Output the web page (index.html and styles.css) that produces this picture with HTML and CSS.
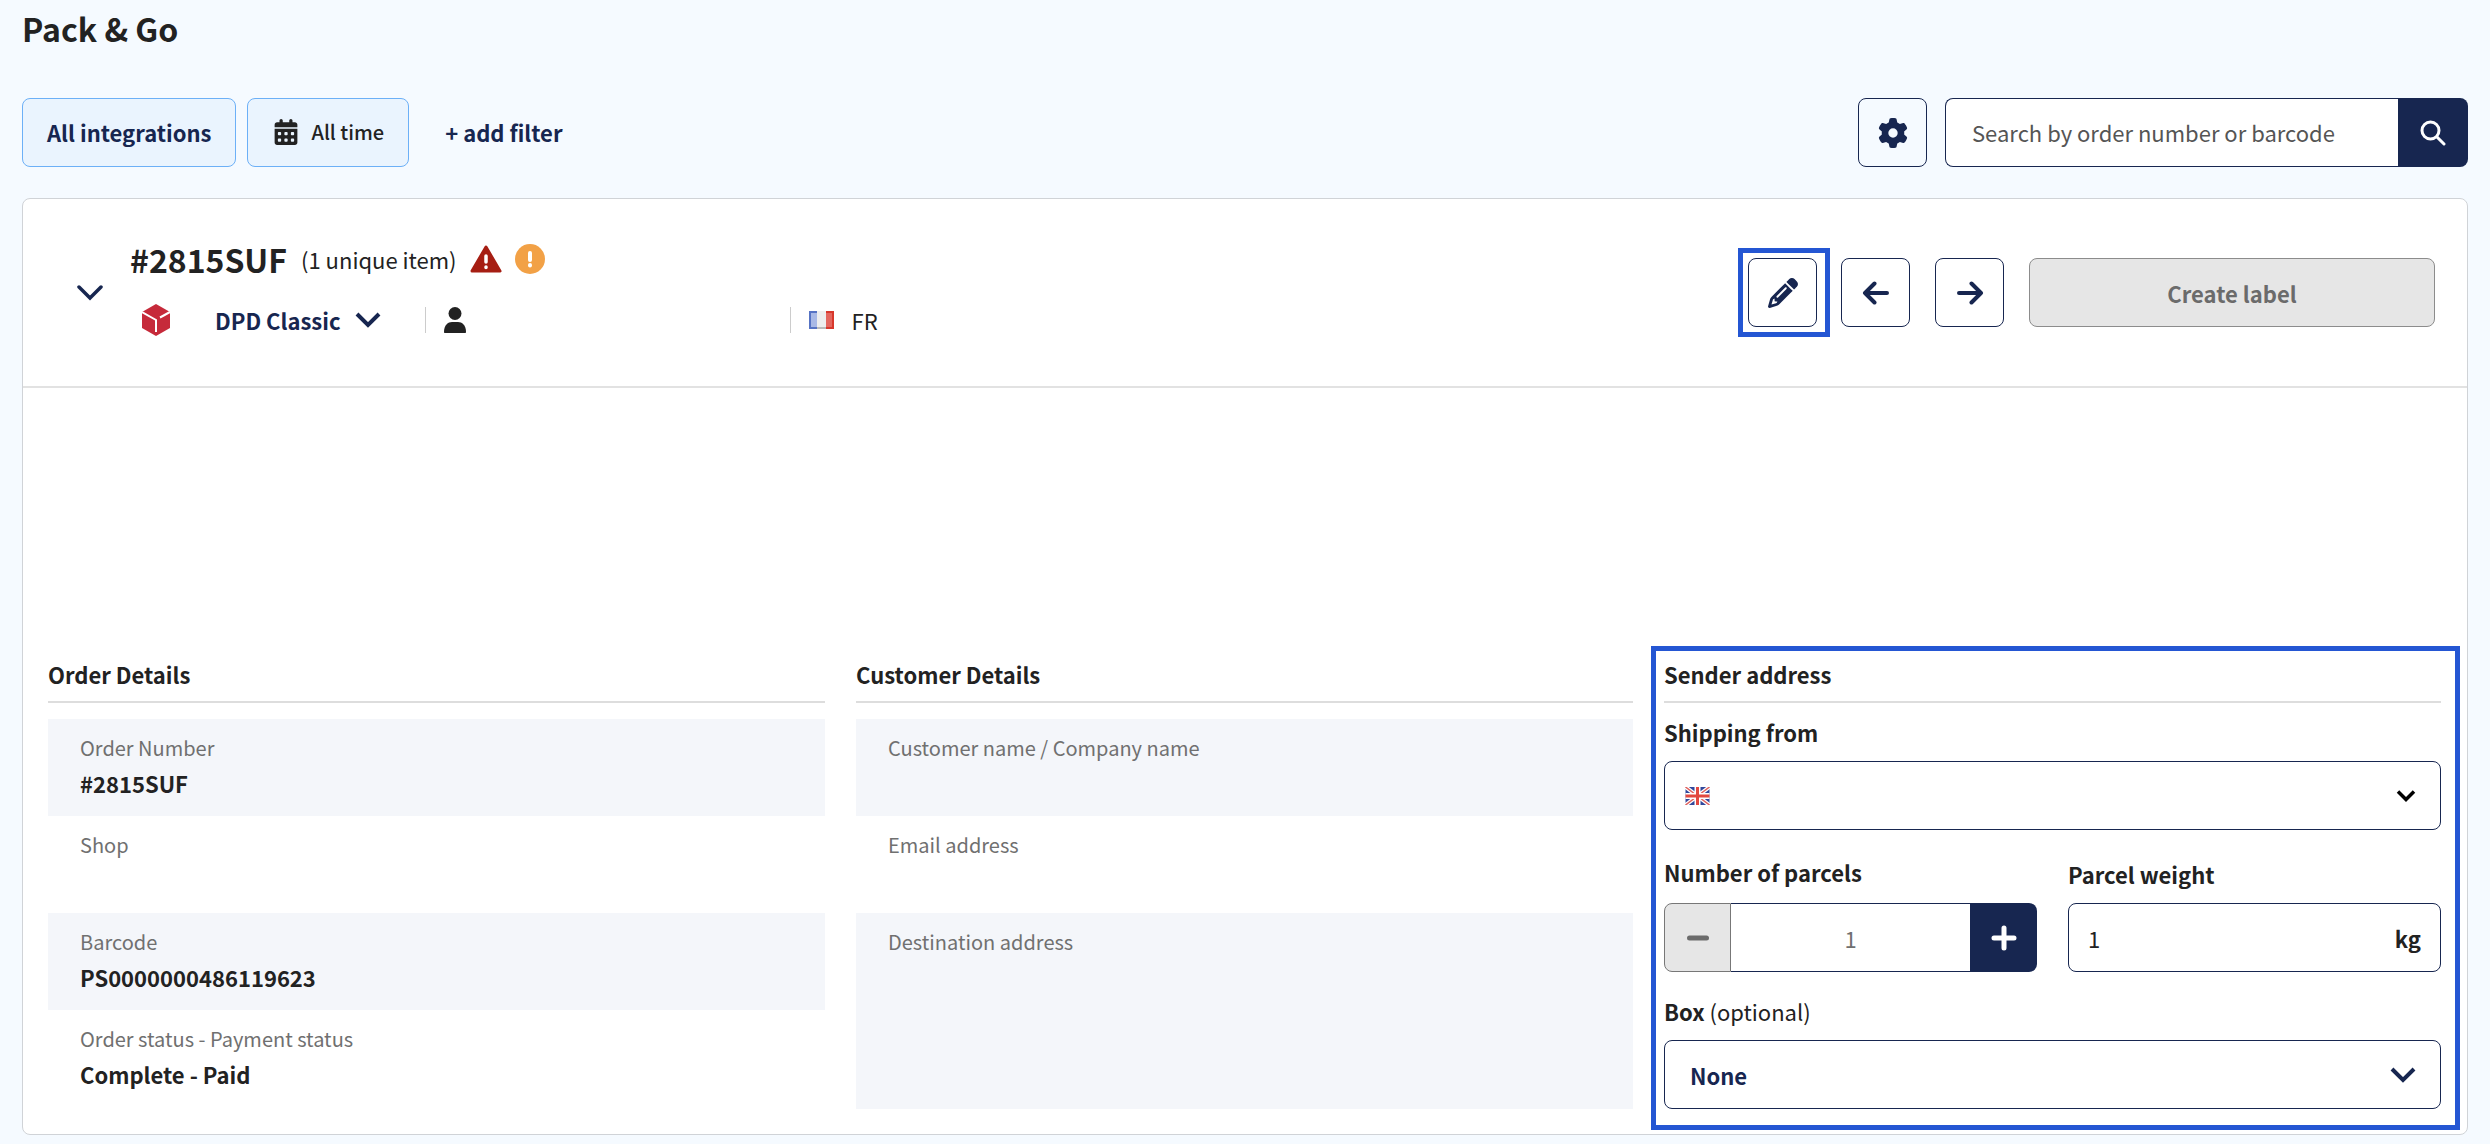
FILE: index.html
```
<!DOCTYPE html>
<html lang="en">
<head>
	<meta charset="utf-8">
	<title>Pack &amp; Go</title>
	<meta name="viewport" content="width=device-width, initial-scale=1">
	<link rel="stylesheet" href="styles.css">
</head>
<body>
	<h1 class="page-title">Pack &amp; Go</h1>

	<div class="toolbar">
		<button type="button" class="filter">All integrations</button>
		<button type="button" class="filter filter-date">
			<svg class="icon" width="24" height="26" viewBox="0 0 448 512" fill="currentColor"><path d="M128 0c17.700 0 32 14.300 32 32v32h128V32c0-17.700 14.300-32 32-32s32 14.300 32 32v32h48c26.500 0 48 21.500 48 48v48H0v-48c0-26.500 21.500-48 48-48h48V32c0-17.700 14.300-32 32-32zM0 192h448v272c0 26.500-21.500 48-48 48H48c-26.500 0-48-21.500-48-48zm64 80v32c0 8.800 7.200 16 16 16h32c8.800 0 16-7.200 16-16v-32c0-8.800-7.200-16-16-16H80c-8.800 0-16 7.200-16 16zm128 0v32c0 8.800 7.200 16 16 16h32c8.800 0 16-7.200 16-16v-32c0-8.800-7.200-16-16-16h-32c-8.800 0-16 7.200-16 16zm144-16c-8.800 0-16 7.200-16 16v32c0 8.800 7.200 16 16 16h32c8.800 0 16-7.200 16-16v-32c0-8.800-7.200-16-16-16zM64 400v32c0 8.800 7.200 16 16 16h32c8.800 0 16-7.200 16-16v-32c0-8.800-7.200-16-16-16H80c-8.800 0-16 7.200-16 16zm144-16c-8.800 0-16 7.200-16 16v32c0 8.800 7.200 16 16 16h32c8.800 0 16-7.200 16-16v-32c0-8.800-7.200-16-16-16zm112 16v32c0 8.800 7.200 16 16 16h32c8.800 0 16-7.200 16-16v-32c0-8.800-7.200-16-16-16h-32c-8.800 0-16 7.200-16 16z"/></svg>
			All time
		</button>
		<button type="button" class="add-filter">+ add filter</button>

		<div class="toolbar-right">
			<button type="button" class="icon-button" aria-label="Settings">
				<svg class="icon" width="30" height="30" viewBox="0 0 512 512" fill="currentColor"><path d="M495.900 166.600c3.200 8.700 .5 18.400-6.400 24.600l-43.300 39.400c1.100 8.300 1.700 16.800 1.700 25.400s-.6 17.100-1.700 25.400l43.300 39.400c6.900 6.200 9.600 15.900 6.400 24.600c-4.400 11.900-9.700 23.300-15.800 34.300l-4.700 8.100c-6.600 11-14 21.400-22.100 31.200c-5.900 7.200-15.700 9.600-24.500 6.800l-55.700-17.700c-13.400 10.300-28.200 18.900-44 25.400l-12.500 57.100c-2 9.100-9 16.300-18.200 17.800c-13.800 2.300-28 3.500-42.500 3.500s-28.700-1.200-42.500-3.500c-9.200-1.500-16.200-8.700-18.200-17.800l-12.500-57.100c-15.800-6.500-30.600-15.100-44-25.400L83.100 425.900c-8.800 2.800-18.600 .3-24.500-6.800c-8.100-9.800-15.500-20.200-22.100-31.200l-4.700-8.100c-6.100-11-11.400-22.400-15.800-34.300c-3.200-8.700-.5-18.400 6.400-24.600l43.300-39.400C64.600 273.100 64 264.600 64 256s.6-17.100 1.700-25.400L22.400 191.200c-6.900-6.200-9.600-15.900-6.400-24.600c4.400-11.900 9.700-23.300 15.800-34.300l4.700-8.100c6.600-11 14-21.400 22.100-31.200c5.900-7.200 15.700-9.600 24.500-6.800l55.700 17.700c13.400-10.300 28.200-18.900 44-25.400l12.500-57.100c2-9.100 9-16.300 18.200-17.800C227.300 1.200 241.500 0 256 0s28.700 1.200 42.500 3.500c9.200 1.500 16.200 8.700 18.200 17.800l12.500 57.100c15.800 6.500 30.600 15.100 44 25.400l55.700-17.700c8.800-2.800 18.600-.3 24.500 6.800c8.100 9.800 15.500 20.200 22.100 31.200l4.700 8.100c6.100 11 11.400 22.400 15.800 34.300zM256 336a80 80 0 1 0 0-160 80 80 0 1 0 0 160z"/></svg>
			</button>
			<form class="search">
				<input type="text" class="search-input" aria-label="Search" placeholder="Search by order number or barcode">
				<button type="button" class="search-button" aria-label="Search">
					<svg class="icon" width="26" height="26" viewBox="0 0 26 26" fill="none" stroke="currentColor" stroke-width="3" stroke-linecap="round"><circle cx="10.500" cy="10.500" r="8.500"/><path d="M17 17l7 7"/></svg>
				</button>
			</form>
		</div>
	</div>

	<div class="order">
		<div class="order-header">
			<button type="button" class="toggle" aria-label="Collapse order">
				<svg class="icon" width="28" height="16" viewBox="0 0 28 16" fill="none" stroke="currentColor" stroke-width="3.500" stroke-linecap="round"><path d="M3 2l11 11L25 2"/></svg>
			</button>
			<div class="order-info">
				<div class="order-title">
					<h2 class="order-number">#2815SUF</h2>
					<span class="order-items">(1 unique item)</span>
					<svg class="icon icon-danger" width="32" height="28" viewBox="0 0 32 28"><path d="M16 2L30 26H2z" fill="#a61e13" stroke="#a61e13" stroke-width="3" stroke-linejoin="round"/><path d="M16 11v6M16 22v.5" stroke="#fff" stroke-width="3.500" stroke-linecap="round"/></svg>
					<svg class="icon" width="30" height="30" viewBox="0 0 30 30"><circle cx="15" cy="15" r="15" fill="#f2a146"/><path d="M15 9v7M15 21v.5" stroke="#fff" stroke-width="4" stroke-linecap="round"/></svg>
				</div>
				<div class="order-meta">
					<svg class="icon" width="28" height="32" viewBox="0 0 28 32"><path d="M14 0l14 8v16l-14 8-14-8V8z" fill="#c62a3a"/><path d="M0 8l14 8v12M18 13.500L28 8" fill="none" stroke="#fff" stroke-width="2"/></svg>
					<button type="button" class="carrier">
						DPD Classic
						<svg class="icon" width="26" height="16" viewBox="0 0 26 16" fill="none" stroke="currentColor" stroke-width="4"><path d="M2 2l11 11L24 2"/></svg>
					</button>
					<div class="meta-customer">
						<svg class="icon" width="22" height="26" viewBox="0 0 22 26" fill="#222"><circle cx="11" cy="6.500" r="6.500"/><path d="M0 25c0-7 4-10 8-10h6c4 0 8 3 8 10 0 .6-.4 1-1 1H1c-.6 0-1-.4-1-1z"/></svg>
					</div>
					<div class="meta-country">
						<svg class="icon" width="25" height="18" viewBox="0 0 25 18"><path d="M0 0h25v18H0z" fill="#eee"/><path d="M0 0h8v18H0z" fill="#a9b9e6"/><path d="M17 0h8v18h-8z" fill="#e4675f"/><path d="M8 1H1v16h7" fill="none" stroke="#5673c4" stroke-width="2"/><path d="M17 1h7v16h-7" fill="none" stroke="#d8382c" stroke-width="2"/><path d="M8 17h9" stroke="#bbb" stroke-width="2"/></svg>
						FR
					</div>
				</div>
			</div>
			<div class="order-actions">
				<div class="highlight highlight-edit">
					<button type="button" class="icon-button" aria-label="Edit">
						<svg class="icon" width="30" height="30" viewBox="0 0 512 512" fill="currentColor"><path d="M410.300 231l11.300-11.300-33.900-33.900-62.100-62.100L291.700 89.800l-11.300 11.300-22.600 22.600L58.600 322.900c-10.400 10.400-18 23.300-22.200 37.400L1 480.700c-2.500 8.400-.2 17.500 6.100 23.700s15.300 8.500 23.700 6.100l120.300-35.400c14.100-4.200 27-11.800 37.400-22.200L387.700 253.700 410.300 231zM160 399.400l-9.100 22.700c-4 3.100-8.500 5.400-13.300 6.900L59.400 452l23-78.100c1.400-4.900 3.800-9.400 6.900-13.300l22.700-9.100v32c0 8.800 7.200 16 16 16h32zM362.700 18.700L348.300 33.200 325.700 55.800 314.300 67.100l33.900 33.900 62.100 62.100 33.900 33.900 11.300-11.300 22.600-22.600 14.500-14.500c25-25 25-65.500 0-90.500L453.300 18.700c-25-25-65.500-25-90.500 0zm-47.400 168l-144 144c-6.200 6.200-16.400 6.200-22.600 0s-6.200-16.400 0-22.600l144-144c6.200-6.200 16.400-6.200 22.600 0s6.200 16.400 0 22.600z"/></svg>
					</button>
				</div>
				<button type="button" class="icon-button" aria-label="Previous order">
					<svg class="icon" width="28" height="24" viewBox="0 0 28 24" fill="none" stroke="currentColor" stroke-width="4" stroke-linecap="round" stroke-linejoin="round"><path d="M25 12H3M12.500 2.500L3 12l9.500 9.500"/></svg>
				</button>
				<button type="button" class="icon-button" aria-label="Next order">
					<svg class="icon" width="28" height="24" viewBox="0 0 28 24" fill="none" stroke="currentColor" stroke-width="4" stroke-linecap="round" stroke-linejoin="round"><path d="M3 12h22M15.500 2.500L25 12l-9.500 9.500"/></svg>
				</button>
				<button type="button" class="create-label" disabled>Create label</button>
			</div>
		</div>

		<div class="order-body">
			<section class="column">
				<h3 class="column-title">Order Details</h3>
				<dl class="details">
					<div class="detail"><dt>Order Number</dt><dd>#2815SUF</dd></div>
					<div class="detail"><dt>Shop</dt><dd></dd></div>
					<div class="detail"><dt>Barcode</dt><dd>PS0000000486119623</dd></div>
					<div class="detail"><dt>Order status - Payment status</dt><dd>Complete - Paid</dd></div>
				</dl>
			</section>

			<section class="column">
				<h3 class="column-title">Customer Details</h3>
				<dl class="details">
					<div class="detail"><dt>Customer name / Company name</dt><dd></dd></div>
					<div class="detail"><dt>Email address</dt><dd></dd></div>
					<div class="detail detail-tall"><dt>Destination address</dt><dd></dd></div>
				</dl>
			</section>

			<section class="column highlight highlight-sender">
				<h3 class="column-title">Sender address</h3>
				<label class="label label-from" for="shipping-from">Shipping from</label>
				<div class="control">
					<svg class="icon flag" width="25" height="18" viewBox="0 0 24 18"><path d="M0 0h24v18H0z" fill="#31479b"/><path d="M0 0l24 18M24 0L0 18" stroke="#fff" stroke-width="4"/><path d="M0 0l24 18M24 0L0 18" stroke="#e0605c" stroke-width="1.500"/><path d="M12 0v18M0 9h24" stroke="#fff" stroke-width="6"/><path d="M12 0v18M0 9h24" stroke="#e2483f" stroke-width="3"/></svg>
					<select id="shipping-from" class="select"><option></option></select>
					<svg class="icon arrow" width="20" height="12" viewBox="0 0 20 12" fill="none" stroke="#000" stroke-width="3.500"><path d="M2 1.500l8 8 8-8"/></svg>
				</div>
				<div class="parcels">
					<div>
						<label class="label label-count" for="parcels">Number of parcels</label>
						<div class="stepper">
							<button type="button" class="step step-minus" aria-label="Less" disabled>
								<svg class="icon" width="22" height="6" viewBox="0 0 22 6"><path d="M2.500 3h17" stroke="currentColor" stroke-width="5" stroke-linecap="round"/></svg>
							</button>
							<input type="text" id="parcels" class="step-value" value="1">
							<button type="button" class="step step-plus" aria-label="More">
								<svg class="icon" width="26" height="26" viewBox="0 0 26 26"><path d="M3 13h20M13 3v20" stroke="currentColor" stroke-width="5" stroke-linecap="round"/></svg>
							</button>
						</div>
					</div>
					<div>
						<label class="label" for="weight">Parcel weight</label>
						<div class="control">
							<input type="text" id="weight" class="weight" value="1">
							<span class="unit">kg</span>
						</div>
					</div>
				</div>
				<label class="label" for="box">Box <span class="optional">(optional)</span></label>
				<div class="control">
					<select id="box" class="select select-box"><option>None</option></select>
					<svg class="icon arrow" width="26" height="16" viewBox="0 0 26 16" fill="none" stroke="#172650" stroke-width="4"><path d="M2 2l11 11L24 2"/></svg>
				</div>
			</section>
		</div>
	</div>
</body>
</html>
```
FILE: styles.css
```
*{box-sizing:border-box;}
body{margin:0; padding:0 22px 9px; background:#f5faff; color:#222; font:22px/32px "Noto Sans CJK SC", sans-serif;}
h1, h2, h3, dl, dd{margin:0;}
button, input, select{font:inherit; color:inherit; margin:0;}
button{cursor:pointer; padding:0;}
.icon{display:block; flex:none;}

.page-title{font-size:32px; line-height:56px; font-weight:700;}

/* filters and search */
.toolbar{display:flex; align-items:center; margin-top:42px; color:#172650;}
.filter{height:69px; padding:0 24px 2px; margin-right:11px; border:1px solid #6cb0f7; border-radius:8px; background:#eaf4fe; font-weight:700;}
.filter-date{display:flex; align-items:center; gap:13px; padding-left:26px; color:#222; font-size:20px; font-weight:500;}
.add-filter{padding-bottom:2px; border:0; background:none; margin-left:25px; font-weight:700;}
.toolbar-right{display:flex; gap:18px; margin-left:auto;}
.icon-button{display:flex; align-items:center; justify-content:center; width:69px; height:69px; border:1px solid #172650; border-radius:8px; background:transparent; color:#172650;}
.search{display:flex;}
.search-input{width:453px; height:69px; padding:0 26px 2px; border:1px solid #172650; border-right:0; border-radius:8px 0 0 8px; background:#fff;}
.search-input::placeholder{color:#555; opacity:1;}
.search-button{display:flex; align-items:center; justify-content:center; width:70px; border:0; border-radius:0 8px 8px 0; background:#172650; color:#fff;}

/* order card */
.order{margin-top:31px; border:1px solid #d0d3d7; border-radius:8px; background:#fff;}
.order-header{display:flex; align-items:center; height:189px; padding:0 32px 0 53px; border-bottom:2px solid #e2e2e2;}
.toggle{border:0; background:none; color:#172650; margin-right:26px;}
.order-title{display:flex; align-items:center; height:56px; padding-bottom:2px;}
.order-number{font-size:32px; font-weight:700; margin-right:14px;}
.icon-danger{margin:0 13px;}
.order-meta{display:flex; align-items:center; height:66px; padding:0 0 2px 12px;}
.carrier{display:flex; align-items:center; gap:14px; margin:0 44px 0 45px; border:0; background:none; color:#172650; font-weight:700;}
.meta-customer{width:365px; padding-left:18px; border-left:1px solid #ccc;}
.meta-country{display:flex; align-items:center; gap:18px; height:26px; padding-left:18px; border-left:1px solid #ccc;}
.order-actions{display:flex; align-items:center; gap:25px; margin-left:auto;}
.highlight{border:5px solid #2456d3;}
.highlight-edit{padding:5px 8px 5px 5px; margin-right:-14px;}
.create-label{width:406px; height:69px; border:1px solid #8c8c8c; border-radius:8px; background:#e6e6e6; color:#6b6b6b; font-weight:700;}

/* order details */
.order-body{display:grid; grid-template-columns:repeat(3, 1fr); gap:31px; padding:263px 26px 25px 25px;}
.column-title{height:52px; padding-top:7px; border-bottom:2px solid #ddd; font-size:22px; line-height:32px; font-weight:700;}
.details{padding-top:16px;}
.detail{height:97px; padding:12px 32px;}
.detail:nth-child(odd){background:#f4f6fa;}
.detail-tall{height:196px;}
dt{font-size:20px; line-height:34px; color:#707070;}
dd{line-height:36px; font-weight:700;}

/* sender form */
.highlight-sender{margin:-5px -19px -21px -13px; padding:0 14px 0 8px;}
.label{display:block; margin-bottom:13px; font-weight:700;}
.label-from{margin-top:13px;}
.label-count{margin-bottom:15px;}
.control{display:flex; align-items:center; position:relative; height:69px; border:1px solid #172650; border-radius:8px;}
.flag{position:absolute; left:20px;}
.arrow{position:absolute; right:24px; pointer-events:none;}
.select{appearance:none; width:100%; height:100%; padding:0 60px; border:0; border-radius:8px; background:transparent;}
.select-box{padding-left:25px; color:#172650; font-weight:700;}
.parcels{display:grid; grid-template-columns:repeat(2, minmax(0, 1fr)); align-items:end; gap:31px; margin:26px 0 23px;}
.stepper{display:flex; height:69px;}
.step{display:flex; align-items:center; justify-content:center; width:67px; border:1px solid #777;}
.step-minus{border-radius:8px 0 0 8px; background:#e6e6e6; color:#6b6b6b;}
.step-plus{border:0; border-radius:0 8px 8px 0; background:#172650; color:#fff;}
.step-value{flex:1; min-width:0; border:1px solid #172650; border-width:1px 0; background:#fff; color:#707070; text-align:center;}
.weight{flex:1; min-width:0; padding:0 19px; border:0; background:none;}
.unit{padding-right:19px; font-weight:700;}
.optional{font-weight:400;}
```
